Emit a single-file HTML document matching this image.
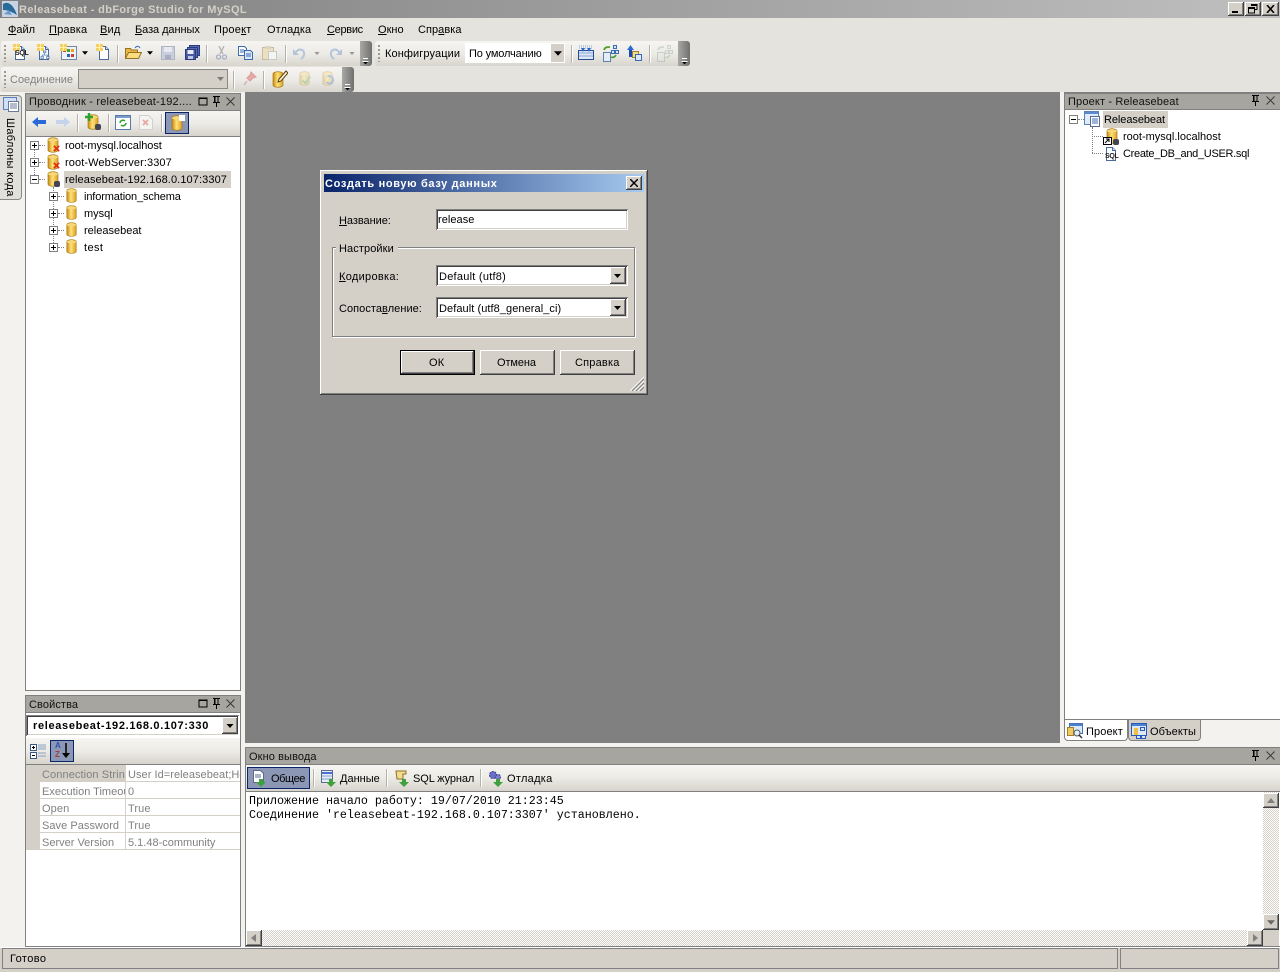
<!DOCTYPE html>
<html><head><meta charset="utf-8"><title>Releasebeat - dbForge Studio for MySQL</title>
<style>
html,body{margin:0;padding:0;width:1280px;height:972px;overflow:hidden;background:#808080}
#r{position:relative;width:1280px;height:972px;overflow:hidden;font:11px "Liberation Sans","DejaVu Sans",sans-serif;color:#000}
#r div,#r svg,#r span.t{position:absolute}
.t{white-space:nowrap;line-height:14px;letter-spacing:.1px;margin-top:1px}
.g{color:#808080}
.tb{background:linear-gradient(#f6f5f2,#ecebe6 50%,#d8d5cd);border-radius:3px}
.ptb{background:linear-gradient(#f6f5f2,#ecebe6 50%,#d6d3cb)}
.ph{background:#a6a59f;border:1px solid #808080;box-sizing:border-box}
.sep{width:1px;background:#b5b2aa;box-shadow:1px 0 #fff}
.end{background:linear-gradient(90deg,#a8a8a4,#707070);border-radius:0 3px 3px 0}
.bv{background:#d4d0c8;box-shadow:inset -1px -1px #404040,inset 1px 1px #fff,inset -2px -2px #808080,inset 2px 2px #d4d0c8}
.sk{background:#fff;box-shadow:inset 1px 1px #808080,inset -1px -1px #fff,inset 2px 2px #404040,inset -2px -2px #d4d0c8}
.ck{background:repeating-conic-gradient(#d4d0c8 0 25%,#fff 0 50%) 0 0/2px 2px}
.b{box-sizing:border-box;background:#fff;border:1px solid #808080}
.row{left:40px;width:200px;height:17px;box-sizing:border-box;border-bottom:1px solid #d4d0c8}
</style></head><body><div id="r">
<svg width="0" height="0" style="left:0;top:0"><defs>
<linearGradient id="gold"><stop offset="0" stop-color="#c98a10"/><stop offset=".45" stop-color="#ffe27a"/><stop offset="1" stop-color="#d9a020"/></linearGradient>
<symbol id="db" viewBox="0 0 16 16"><path d="M3 3c0-3 10-3 10 0v10c0 3-10 3-10 0z" fill="url(#gold)" stroke="#a87a18" stroke-width=".7"/><ellipse cx="8" cy="3" rx="5" ry="1.600" fill="#f6d878"/></symbol>
<symbol id="plus" viewBox="0 0 9 9"><rect x=".5" y=".5" width="8" height="8" fill="#fff" stroke="#808080"/><path d="M2 4.500h5M4.500 2v5" stroke="#000"/></symbol>
<symbol id="minus" viewBox="0 0 9 9"><rect x=".5" y=".5" width="8" height="8" fill="#fff" stroke="#808080"/><path d="M2 4.500h5" stroke="#000"/></symbol>
<symbol id="x" viewBox="0 0 8 8"><path d="M1 1l6 6M7 1l-6 6" stroke="#e03010" stroke-width="2"/></symbol>
<symbol id="doc" viewBox="0 0 16 16"><path d="M3.500 1.500h6l3 3v10h-9z" fill="#fff" stroke="#4a6a9a"/><path d="M9.500 1.500v3h3" fill="#d8e4f4" stroke="#4a6a9a"/></symbol>
<symbol id="star" viewBox="0 0 8 8"><rect width="8" height="8" fill="#f5d060"/><path d="M0 4h8M4 0v8" stroke="#fff4b0"/></symbol>
<symbol id="pin" viewBox="0 0 9 11"><path d="M2.500 1v5M6 1v5M1 6.500h7M1 .5h7M4.500 7v4M3 1v5" stroke="#000" fill="none"/></symbol>
<symbol id="cl" viewBox="0 0 9 9"><path d="M.5 .5l8 8M8.500 .5l-8 8" stroke="#333" stroke-width=".9"/></symbol>
<symbol id="win" viewBox="0 0 10 9"><rect x="1" y="1" width="8" height="7" fill="none" stroke="#000"/><path d="M1 1.500h8" stroke="#000"/></symbol>
<symbol id="arr" viewBox="0 0 7 4"><path d="M0 0h7L3.500 4z" fill="#000"/></symbol>
<symbol id="tree" viewBox="0 0 16 16"><g fill="#dce8f6" stroke="#3a6ab0"><rect x="5.500" y="1.500" width="4" height="3"/><rect x="1.500" y="10.500" width="4" height="3"/><rect x="10.500" y="10.500" width="4" height="3"/></g><path d="M7.500 5v3M3.500 10V8h9v2" stroke="#3a6ab0" fill="none"/></symbol>
</defs></svg>

<!-- title -->
<div style="left:0;top:0;width:1280px;height:18px;background:linear-gradient(90deg,#7f7f7f,#bfbfbf)"></div>
<svg style="left:2px;top:1px" width="16" height="16" viewBox="0 0 16 16"><rect width="16" height="16" fill="#c8d4e4"/><path d="M1 3c5-3 10 0 14 11-5-3-9-5-14-5z" fill="#2a6a9a"/><path d="M2 13l5-4 3 5z" fill="#6a9ac8"/></svg>
<span class="t" style="left:19px;top:2px;font-weight:bold;font-size:11px;color:#d4d0c8;letter-spacing:.37px">Releasebeat - dbForge Studio for MySQL</span>
<div class="bv" style="left:1228px;top:2px;width:16px;height:14px"></div><div style="left:1232px;top:11px;width:6px;height:2px;background:#000"></div>
<div class="bv" style="left:1245px;top:2px;width:16px;height:14px"></div>
<svg style="left:1248px;top:4px" width="10" height="10" viewBox="0 0 10 10"><path d="M3 .5h6v5H7M3 1.500h6" fill="none" stroke="#000"/><rect x=".5" y="3.500" width="6" height="5.500" fill="#d4d0c8" stroke="#000"/><path d="M1 4.500h5" stroke="#000"/></svg>
<div class="bv" style="left:1262px;top:2px;width:17px;height:14px"></div>
<svg style="left:1266px;top:5px" width="9" height="8" viewBox="0 0 9 8"><path d="M1 0l7 8M8 0l-7 8" stroke="#000" stroke-width="1.600"/></svg>

<!-- menu -->
<div style="left:0;top:18px;width:1280px;height:74px;background:#e5e3dd"></div>
<span class="t" style="left:8px;top:22px;letter-spacing:0"><u>Ф</u>айл</span>
<span class="t" style="left:49px;top:22px;letter-spacing:.2px"><u>П</u>равка</span>
<span class="t" style="left:100px;top:22px;letter-spacing:.2px"><u>В</u>ид</span>
<span class="t" style="left:135px;top:22px;letter-spacing:-.07px"><u>Б</u>аза данных</span>
<span class="t" style="left:214px;top:22px;letter-spacing:.2px">Прое<u>к</u>т</span>
<span class="t" style="left:267px;top:22px;letter-spacing:.1px">Отла<u>д</u>ка</span>
<span class="t" style="left:327px;top:22px;letter-spacing:-.3px"><u>С</u>ервис</span>
<span class="t" style="left:378px;top:22px;letter-spacing:0"><u>О</u>кно</span>
<span class="t" style="left:418px;top:22px;letter-spacing:.05px">Спр<u>а</u>вка</span>

<!-- toolbar 1 -->
<div class="tb" style="left:1px;top:41px;width:371px;height:25px"></div>
<div style="left:4px;top:45px;width:2px;height:17px;background:repeating-linear-gradient(#9a988f 0 2px,transparent 2px 4px)"></div>
<div class="end" style="left:360px;top:41px;width:12px;height:25px"></div>
<svg style="left:362px;top:58px" width="7" height="7" viewBox="0 0 7 7"><path d="M1 .5h5" stroke="#fff"/><path d="M0 3h7L3.500 6.500z" fill="#fff"/><path d="M1 4h5L3.500 6.500z" fill="#000"/></svg>

<svg style="left:12px;top:45px" width="16" height="16"><use href="#doc"/></svg><svg style="left:13px;top:44px" width="7" height="7"><use href="#star"/></svg>
<span class="t" style="left:15px;top:46px;font-size:7px;font-weight:bold;letter-spacing:-.3px;color:#222">SQL</span>
<svg style="left:36px;top:45px" width="16" height="16"><use href="#doc"/></svg><svg style="left:37px;top:44px" width="7" height="7"><use href="#star"/></svg>
<svg style="left:40px;top:50px" width="10" height="10" viewBox="0 0 16 16"><use href="#tree"/></svg>
<svg style="left:61px;top:46px" width="16" height="14" viewBox="0 0 16 14"><rect x=".5" y=".5" width="15" height="13" fill="#eef3fa" stroke="#7088a8"/><rect x="2" y="3" width="3" height="3" fill="#d04030"/><rect x="6" y="3" width="3" height="3" fill="#40a040"/><rect x="10" y="3" width="3" height="3" fill="#f0a020"/><rect x="6" y="8" width="3" height="3" fill="#3060c0"/><rect x="10" y="8" width="3" height="3" fill="#d04030"/></svg><svg style="left:60px;top:44px" width="7" height="7"><use href="#star"/></svg>
<svg style="left:82px;top:51px" width="6" height="4"><use href="#arr"/></svg>
<svg style="left:96px;top:45px" width="16" height="16"><use href="#doc"/></svg><svg style="left:96px;top:44px" width="7" height="7"><use href="#star"/></svg>
<div class="sep" style="left:117px;top:45px;height:18px"></div>
<svg style="left:125px;top:45px" width="17" height="15" viewBox="0 0 17 15"><path d="M.5 13.500v-10h5l1 1.500h6v8.500z" fill="#e8b840" stroke="#9a7020"/><path d="M.5 13.500l3-6h13l-3 6z" fill="#f8dc80" stroke="#9a7020"/><path d="M10 3c2-2.500 4-2 5 0" stroke="#3a6ab0" fill="none"/></svg>
<svg style="left:147px;top:51px" width="6" height="4"><use href="#arr"/></svg>
<svg style="left:161px;top:46px" width="14" height="14" viewBox="0 0 14 14"><rect x=".5" y=".5" width="13" height="13" fill="#c8cede" stroke="#b0b4c0"/><rect x="3" y="1" width="8" height="5" fill="#e8eaf0"/><rect x="4" y="9" width="6" height="4" fill="#a8aebe"/></svg>
<svg style="left:185px;top:45px" width="15" height="15" viewBox="0 0 15 15"><rect x="4.500" y=".5" width="10" height="10" fill="#5a6ab0" stroke="#2a3a80"/><rect x="2.500" y="2.500" width="10" height="10" fill="#5a6ab0" stroke="#2a3a80"/><rect x=".5" y="4.500" width="10" height="10" fill="#4a5aa0" stroke="#2a3a80"/><rect x="2.500" y="5" width="6" height="4" fill="#e8eaf4"/><rect x="3" y="11" width="5" height="3" fill="#c0c8e0"/></svg>
<div class="sep" style="left:206px;top:45px;height:18px"></div>
<svg style="left:216px;top:46px" width="11" height="15" viewBox="0 0 11 15"><path d="M3 0l4 8M8 0L4 8" stroke="#b0b0b4" stroke-width="1.300"/><circle cx="2.500" cy="11" r="2" fill="none" stroke="#a8b0c8" stroke-width="1.300"/><circle cx="8.500" cy="11" r="2" fill="none" stroke="#a8b0c8" stroke-width="1.300"/></svg>
<svg style="left:238px;top:46px" width="15" height="14" viewBox="0 0 15 14"><path d="M.5 .5h6l2 2v7h-8z" fill="#fff" stroke="#3a6ab0"/><path d="M6.500 4.500h6l2 2v7h-8z" fill="#dce8f8" stroke="#3a6ab0"/><path d="M2 4h4M2 6h4M8 8h5M8 10h5" stroke="#3a6ab0"/></svg>
<svg style="left:262px;top:46px" width="15" height="14" viewBox="0 0 15 14"><rect x=".5" y="1.500" width="11" height="12" fill="#ece0c0" stroke="#c8bc9c"/><rect x="3" y="0" width="6" height="3" fill="#d8d4c8"/><path d="M6.500 5.500h8v8h-8z" fill="#f4f4f0" stroke="#c8c8c8"/></svg>
<div class="sep" style="left:285px;top:45px;height:18px"></div>
<svg style="left:293px;top:47px" width="13" height="13" viewBox="0 0 13 13"><path d="M3 5c3-4 9-3 8 3-.3 2-2 3-3 4" fill="none" stroke="#b4c4dc" stroke-width="2"/><path d="M0 2v6h6z" fill="#b4c4dc"/></svg>
<svg style="left:314px;top:52px" width="6" height="3"><use href="#arr" opacity=".35"/></svg>
<svg style="left:329px;top:47px" width="13" height="13" viewBox="0 0 13 13"><path d="M10 5C7 1 1 2 2 8c.3 2 2 3 3 4" fill="none" stroke="#b4c4dc" stroke-width="2"/><path d="M13 2v6H7z" fill="#b4c4dc"/></svg>
<svg style="left:349px;top:52px" width="6" height="3"><use href="#arr" opacity=".35"/></svg>

<!-- toolbar config -->
<div class="tb" style="left:375px;top:41px;width:315px;height:25px"></div>
<div style="left:378px;top:45px;width:2px;height:17px;background:repeating-linear-gradient(#9a988f 0 2px,transparent 2px 4px)"></div>
<span class="t" style="left:385px;top:46px;letter-spacing:.1px">Конфигруации</span>
<div style="left:465px;top:43px;width:100px;height:20px;background:#fff"></div>
<span class="t" style="left:469px;top:46px;letter-spacing:-.15px">По умолчанию</span>
<div style="left:551px;top:44px;width:13px;height:18px;background:#d4d0c8"></div>
<svg style="left:554px;top:51px" width="8" height="5"><use href="#arr"/></svg>
<div class="sep" style="left:571px;top:45px;height:18px"></div>
<svg style="left:578px;top:45px" width="16" height="16" viewBox="0 0 16 16"><rect x=".5" y="5.500" width="15" height="9" fill="#dce8f8" stroke="#2a4a90"/><path d="M1 8h14M1 11h14" stroke="#8aa4d0"/><path d="M1 1h14M1 3h14" stroke="#8aa4d0" stroke-dasharray="1 1"/><path d="M3 3h4L5 7zM9 3h4l-2 4z" fill="#2a6ad0"/></svg>
<svg style="left:602px;top:45px" width="17" height="17" viewBox="0 0 17 17"><rect x="1.500" y="7.500" width="7" height="9" fill="#e4ecf8" stroke="#6080b0"/><path d="M2 5c1-3 3-3 6-3" stroke="#50a030" stroke-width="1.800" fill="none"/><path d="M9 12c2 1 4 0 5-2" stroke="#50a030" stroke-width="1.800" fill="none"/><g fill="#d8e4f8" stroke="#3a6ab0"><rect x="11.500" y=".5" width="3" height="3"/><rect x="9.500" y="5.500" width="3" height="3"/><rect x="13.500" y="5.500" width="3" height="3"/></g></svg>
<svg style="left:627px;top:45px" width="15" height="16" viewBox="0 0 15 16"><path d="M3.500 12V4" stroke="#1a4ab0" stroke-width="3"/><path d="M0 5l3.500-5L7 5z" fill="#2a6ad0"/><rect x="5.500" y="6.500" width="6" height="6" fill="#f4dc90" stroke="#a08030"/><rect x="8.500" y="9.500" width="6" height="6" fill="#dce8f8" stroke="#3a6ab0"/></svg>
<div class="sep" style="left:649px;top:45px;height:18px"></div>
<svg style="left:656px;top:45px" width="17" height="17" viewBox="0 0 17 17" opacity=".35"><rect x="1.500" y="7.500" width="7" height="9" fill="#e4e8e8" stroke="#90a0a0"/><path d="M2 5c1-3 3-3 6-3" stroke="#90b090" stroke-width="1.800" fill="none"/><path d="M9 12c2 1 4 0 5-2" stroke="#90b090" stroke-width="1.800" fill="none"/><g fill="#d8e4e8" stroke="#90a0a0"><rect x="11.500" y=".5" width="3" height="3"/><rect x="9.500" y="5.500" width="3" height="3"/><rect x="13.500" y="5.500" width="3" height="3"/></g></svg>
<div class="end" style="left:678px;top:41px;width:12px;height:25px"></div>
<svg style="left:681px;top:58px" width="7" height="7" viewBox="0 0 7 7"><path d="M1 .5h5" stroke="#fff"/><path d="M0 3h7L3.500 6.500z" fill="#fff"/><path d="M1 4h5L3.500 6.500z" fill="#000"/></svg>

<!-- toolbar 2 -->
<div class="tb" style="left:1px;top:67px;width:353px;height:25px"></div>
<div style="left:4px;top:71px;width:2px;height:17px;background:repeating-linear-gradient(#9a988f 0 2px,transparent 2px 4px)"></div>
<span class="t g" style="left:10px;top:72px;letter-spacing:0">Соединение</span>
<div style="left:78px;top:69px;width:150px;height:20px;box-sizing:border-box;border:1px solid #8a8a84;background:#d4d0c8"></div>
<svg style="left:217px;top:77px" width="7" height="4"><use href="#arr" opacity=".4"/></svg>
<div class="sep" style="left:233px;top:71px;height:18px"></div>
<svg style="left:243px;top:71px" width="14" height="15" viewBox="0 0 14 15"><path d="M8 1l5 5-3 1-3 3-3-3 3-3z" fill="#e8a8a8" stroke="#d8a0a0"/><path d="M4 10l-3 4" stroke="#c8b8b8" stroke-width="1.500"/></svg>
<div class="sep" style="left:263px;top:71px;height:18px"></div>
<svg style="left:272px;top:70px" width="16" height="18" viewBox="0 0 16 18"><path d="M1 4c0-3 10-3 10 0v11c0 3-10 3-10 0z" fill="url(#gold)" stroke="#a87a18" stroke-width=".7"/><path d="M14 1L7 9l-1 3 3-1 7-8z" fill="#f8f0d0" stroke="#5a4010"/></svg>
<svg style="left:297px;top:70px" width="15" height="17" viewBox="0 0 16 16" opacity=".3"><use href="#db"/><path d="M6 10l3 3 5-7" stroke="#40a040" stroke-width="2" fill="none"/></svg>
<svg style="left:320px;top:70px" width="15" height="17" viewBox="0 0 16 16" opacity=".3"><use href="#db"/><path d="M8 6a4 4 0 1 1-1 6" stroke="#2a6ad0" stroke-width="2" fill="none"/></svg>
<div class="end" style="left:342px;top:67px;width:12px;height:25px"></div>
<svg style="left:344px;top:84px" width="7" height="7" viewBox="0 0 7 7"><path d="M1 .5h5" stroke="#fff"/><path d="M0 3h7L3.500 6.500z" fill="#fff"/><path d="M1 4h5L3.500 6.500z" fill="#000"/></svg>

<!-- left strip -->
<div style="left:0;top:92px;width:245px;height:855px;background:#f3f2ef"></div>
<div style="left:0;top:95px;width:22px;height:105px;box-sizing:border-box;border:1px solid #8a8a84;border-left:0;border-radius:0 4px 4px 0;background:#e2e0da"></div>
<svg style="left:3px;top:97px" width="17" height="16" viewBox="0 0 17 16"><rect x=".5" y=".5" width="13" height="12" fill="#cfe0f6" stroke="#5a80c0"/><rect x="5.500" y="4.500" width="10" height="10" fill="#fff" stroke="#6a7a9a"/><path d="M7 7h7M7 9h7M7 11h7" stroke="#6a7a9a"/></svg>
<span class="t" style="left:3px;top:117px;writing-mode:vertical-rl;line-height:14px;letter-spacing:.3px">Шаблоны кода</span>

<!-- explorer -->
<div class="b" style="left:25px;top:93px;width:216px;height:598px"></div>
<div class="ph" style="left:25px;top:93px;width:216px;height:18px"></div>
<span class="t" style="left:29px;top:94px;color:#111;letter-spacing:.2px">Проводник - releasebeat-192....</span>
<svg style="left:198px;top:97px" width="10" height="9"><use href="#win"/></svg>
<svg style="left:212px;top:96px" width="9" height="11"><use href="#pin"/></svg>
<svg style="left:226px;top:97px" width="9" height="9"><use href="#cl"/></svg>
<div class="ptb" style="left:26px;top:111px;width:214px;height:25px;border-bottom:1px solid #808080"></div>
<svg style="left:32px;top:116px" width="14" height="12" viewBox="0 0 14 12"><path d="M0 6l6-5v3h8v4H6v3z" fill="#2a6ad8"/></svg>
<svg style="left:56px;top:116px" width="14" height="12" viewBox="0 0 14 12"><path d="M14 6L8 1v3H0v4h8v3z" fill="#c4d4ea"/></svg>
<div class="sep" style="left:77px;top:114px;height:18px"></div>
<svg style="left:85px;top:114px" width="16" height="16"><use href="#db"/></svg>
<svg style="left:85px;top:113px" width="8" height="8" viewBox="0 0 8 8"><path d="M4 0v8M0 4h8" stroke="#30a030" stroke-width="2.500"/></svg>
<svg style="left:95px;top:124px" width="6" height="6" viewBox="0 0 6 6"><rect width="6" height="6" rx="2" fill="#445"/></svg>
<div class="sep" style="left:108px;top:114px;height:18px"></div>
<svg style="left:115px;top:115px" width="16" height="15" viewBox="0 0 16 15"><rect x=".5" y=".5" width="15" height="14" fill="#fff" stroke="#5a7aa8"/><rect x="1" y="1" width="14" height="2" fill="#7a9cd0"/><path d="M5 8a3 3 0 0 1 5-2M11 8a3 3 0 0 1-5 2" stroke="#30a030" stroke-width="1.500" fill="none"/></svg>
<svg style="left:139px;top:115px" width="14" height="15" viewBox="0 0 14 15"><path d="M.5 .5h9l4 4v10H.5z" fill="#f4f4f2" stroke="#d0d0cc"/><path d="M4 5l5 5M9 5l-5 5" stroke="#e8a8a0" stroke-width="1.800"/></svg>
<div class="sep" style="left:161px;top:114px;height:18px"></div>
<div style="left:165px;top:112px;width:24px;height:22px;box-sizing:border-box;border:1px solid #0a246a;background:#8c97b5"></div>
<svg style="left:169px;top:115px" width="16" height="16"><use href="#db"/></svg>
<div style="left:179px;top:115px;width:6px;height:6px;background:#fff"></div>

<!-- tree -->
<div style="left:34px;top:150px;width:0;height:29px;border-left:1px dotted #808080"></div>
<div style="left:53px;top:187px;width:0;height:60px;border-left:1px dotted #808080"></div>
<div style="left:39px;top:145px;width:6px;border-top:1px dotted #808080"></div>
<div style="left:39px;top:162px;width:6px;border-top:1px dotted #808080"></div>
<div style="left:39px;top:179px;width:6px;border-top:1px dotted #808080"></div>
<div style="left:58px;top:196px;width:6px;border-top:1px dotted #808080"></div>
<div style="left:58px;top:213px;width:6px;border-top:1px dotted #808080"></div>
<div style="left:58px;top:230px;width:6px;border-top:1px dotted #808080"></div>
<div style="left:58px;top:247px;width:6px;border-top:1px dotted #808080"></div>
<svg style="left:30px;top:141px" width="9" height="9"><use href="#plus"/></svg>
<svg style="left:30px;top:158px" width="9" height="9"><use href="#plus"/></svg>
<svg style="left:30px;top:175px" width="9" height="9"><use href="#minus"/></svg>
<svg style="left:49px;top:192px" width="9" height="9"><use href="#plus"/></svg>
<svg style="left:49px;top:209px" width="9" height="9"><use href="#plus"/></svg>
<svg style="left:49px;top:226px" width="9" height="9"><use href="#plus"/></svg>
<svg style="left:49px;top:243px" width="9" height="9"><use href="#plus"/></svg>
<svg style="left:45px;top:137px" width="16" height="16"><use href="#db"/></svg><svg style="left:53px;top:145px" width="7" height="7"><use href="#x"/></svg>
<svg style="left:45px;top:154px" width="16" height="16"><use href="#db"/></svg><svg style="left:53px;top:162px" width="7" height="7"><use href="#x"/></svg>
<svg style="left:45px;top:171px" width="16" height="16"><use href="#db"/></svg><svg style="left:54px;top:181px" width="6" height="6" viewBox="0 0 6 6"><rect width="6" height="6" rx="2" fill="#445"/></svg>
<svg style="left:64px;top:188px" width="15" height="15"><use href="#db"/></svg>
<svg style="left:64px;top:205px" width="15" height="15"><use href="#db"/></svg>
<svg style="left:64px;top:222px" width="15" height="15"><use href="#db"/></svg>
<svg style="left:64px;top:239px" width="15" height="15"><use href="#db"/></svg>
<div style="left:64px;top:171px;width:167px;height:17px;background:#d4d0c8"></div>
<span class="t" style="left:65px;top:138px;letter-spacing:-.05px">root-mysql.localhost</span>
<span class="t" style="left:65px;top:155px">root-WebServer:3307</span>
<span class="t" style="left:65px;top:172px">releasebeat-192.168.0.107:3307</span>
<span class="t" style="left:84px;top:189px;letter-spacing:-.13px">information_schema</span>
<span class="t" style="left:84px;top:206px;letter-spacing:0">mysql</span>
<span class="t" style="left:84px;top:223px;letter-spacing:0">releasebeat</span>
<span class="t" style="left:84px;top:240px;letter-spacing:.4px">test</span>

<!-- properties -->
<div class="b" style="left:25px;top:695px;width:216px;height:252px"></div>
<div class="ph" style="left:25px;top:695px;width:216px;height:18px"></div>
<span class="t" style="left:29px;top:697px;color:#111">Свойства</span>
<svg style="left:198px;top:699px" width="10" height="9"><use href="#win"/></svg>
<svg style="left:212px;top:698px" width="9" height="11"><use href="#pin"/></svg>
<svg style="left:226px;top:699px" width="9" height="9"><use href="#cl"/></svg>
<div class="sk" style="left:26px;top:715px;width:213px;height:21px"></div>
<span class="t" style="left:33px;top:718px;font-weight:bold;letter-spacing:.67px">releasebeat-192.168.0.107:330</span>
<div class="bv" style="left:222px;top:717px;width:16px;height:17px"></div>
<svg style="left:226px;top:724px" width="8" height="4"><use href="#arr"/></svg>
<div class="ptb" style="left:26px;top:738px;width:214px;height:26px;border-bottom:1px solid #808080"></div>
<svg style="left:30px;top:743px" width="17" height="17" viewBox="0 0 17 17"><g fill="#fff" stroke="#3a5a80"><rect x=".5" y="1.500" width="6" height="6"/><rect x=".5" y="9.500" width="6" height="6"/></g><path d="M2 4.500h3M3.500 3v3M2 12.500h3" stroke="#000"/><path d="M8 2h8M8 4h8M8 6h8M8 10h8M8 13h8" stroke="#8aa0c0"/></svg>
<div style="left:50px;top:740px;width:24px;height:22px;box-sizing:border-box;border:1px solid #0a246a;background:#8c97b5"></div>
<span class="t" style="left:55px;top:740px;font-size:8px;font-weight:bold;line-height:9px;color:#3050b0;letter-spacing:0">A<br><span style="color:#a04040">Z</span></span>
<svg style="left:62px;top:743px" width="8" height="16" viewBox="0 0 8 16"><path d="M4 0v12" stroke="#000" stroke-width="1.500"/><path d="M0 10h8l-4 5z" fill="#000"/></svg>
<div style="left:26px;top:765px;width:14px;height:85px;background:#d4d0c8"></div>
<div style="left:40px;top:765px;width:86px;height:17px;background:#d4d0c8"></div>
<div class="row" style="top:765px"></div><div class="row" style="top:782px"></div><div class="row" style="top:799px"></div><div class="row" style="top:816px"></div><div class="row" style="top:833px"></div>
<div style="left:125px;top:765px;width:1px;height:85px;background:#d4d0c8"></div>
<div class="t g" style="left:42px;top:767px;width:83px;overflow:hidden">Connection String</div>
<div class="t g" style="left:42px;top:784px;width:83px;overflow:hidden;letter-spacing:0">Execution Timeout</div>
<span class="t g" style="left:42px;top:801px">Open</span>
<span class="t g" style="left:42px;top:818px;letter-spacing:.05px">Save Password</span>
<span class="t g" style="left:42px;top:835px;letter-spacing:0">Server Version</span>
<div class="t g" style="left:128px;top:767px;width:112px;overflow:hidden;letter-spacing:.05px">User Id=releasebeat;Host</div>
<span class="t g" style="left:128px;top:784px">0</span>
<span class="t g" style="left:128px;top:801px">True</span>
<span class="t g" style="left:128px;top:818px">True</span>
<span class="t g" style="left:128px;top:835px;letter-spacing:0">5.1.48-community</span>

<!-- project panel -->
<div style="left:1060px;top:92px;width:4px;height:655px;background:#f3f2ef"></div>
<div style="left:1064px;top:719px;width:216px;height:28px;background:#f3f2ef"></div>
<div class="b" style="left:1064px;top:93px;width:216px;height:627px;border-right:0"></div>
<div class="ph" style="left:1064px;top:93px;width:216px;height:17px;border-right:0"></div>
<span class="t" style="left:1068px;top:94px;color:#111;letter-spacing:.15px">Проект - Releasebeat</span>
<svg style="left:1251px;top:95px" width="9" height="11"><use href="#pin"/></svg>
<svg style="left:1266px;top:96px" width="9" height="9"><use href="#cl"/></svg>
<div style="left:1092px;top:127px;height:26px;width:0;border-left:1px dotted #808080"></div>
<div style="left:1092px;top:136px;width:11px;border-top:1px dotted #808080"></div>
<div style="left:1092px;top:153px;width:11px;border-top:1px dotted #808080"></div>
<div style="left:1078px;top:119px;width:6px;border-top:1px dotted #808080"></div>
<svg style="left:1069px;top:115px" width="9" height="9"><use href="#minus"/></svg>
<svg style="left:1084px;top:111px" width="17" height="16" viewBox="0 0 17 16"><rect x=".5" y=".5" width="14" height="13" fill="#e0ecfa" stroke="#5a80b8"/><rect x="1" y="1" width="13" height="2" fill="#5a8ad0"/><rect x="6.500" y="5.500" width="9" height="10" fill="#fff" stroke="#5a6a90"/><path d="M8 8h6M8 10h6M8 12h6" stroke="#3a6ab0"/></svg>
<div style="left:1103px;top:111px;width:65px;height:17px;background:#d4d0c8"></div>
<span class="t" style="left:1104px;top:112px;letter-spacing:-.07px">Releasebeat</span>
<svg style="left:1104px;top:128px" width="16" height="16"><use href="#db"/></svg>
<svg style="left:1103px;top:137px" width="9" height="8" viewBox="0 0 9 8"><rect x=".5" y=".5" width="8" height="7" fill="#fff" stroke="#000"/><path d="M2 6l4-4M3 2h3v3" stroke="#000" fill="none"/></svg>
<svg style="left:1113px;top:139px" width="6" height="6" viewBox="0 0 6 6"><rect width="6" height="6" rx="2" fill="#445"/></svg>
<span class="t" style="left:1123px;top:129px;letter-spacing:0">root-mysql.localhost</span>
<svg style="left:1103px;top:146px" width="16" height="16"><use href="#doc"/></svg>
<span class="t" style="left:1105px;top:149px;font-size:7px;font-weight:bold;letter-spacing:-.3px;color:#222">SQL</span>
<span class="t" style="left:1123px;top:146px;letter-spacing:-.3px">Create_DB_and_USER.sql</span>
<div style="left:1064px;top:720px;width:64px;height:21px;box-sizing:border-box;background:#fff;border:1px solid #808080;border-top:0;border-radius:0 0 4px 4px"></div>
<div style="left:1128px;top:720px;width:73px;height:21px;box-sizing:border-box;background:#d4d0c8;border:1px solid #808080;border-top:0;border-radius:0 0 4px 4px"></div>
<svg style="left:1067px;top:723px" width="16" height="16" viewBox="0 0 16 16"><rect x="2.500" y=".5" width="13" height="10" fill="#dce8f8" stroke="#4a70b0"/><rect x="3" y="1" width="12" height="2" fill="#4a80d0"/><path d="M.5 4.500h6v8h-6z" fill="#f0cc60" stroke="#a08030"/><circle cx="10" cy="10" r="3" fill="#e4f0fa" stroke="#505860"/><path d="M12 12l3 3" stroke="#303030" stroke-width="1.500"/></svg>
<span class="t" style="left:1086px;top:724px">Проект</span>
<svg style="left:1131px;top:723px" width="16" height="16" viewBox="0 0 16 16"><rect x=".5" y=".5" width="15" height="12" fill="#dce8f8" stroke="#2a5ab8"/><rect x="1" y="1" width="14" height="2" fill="#4a80d0"/><path d="M3 5h4v7H3z" fill="#f0c040"/><g fill="#d8e4f8" stroke="#2a5ab8"><rect x="9.500" y="4.500" width="4" height="3"/><rect x="5.500" y="12.500" width="4" height="3"/><rect x="10.500" y="12.500" width="4" height="3"/></g></svg>
<span class="t" style="left:1150px;top:724px">Объекты</span>

<!-- output -->
<div style="left:245px;top:743px;width:819px;height:4px;background:#f3f2ef"></div>
<div class="b" style="left:245px;top:747px;width:1035px;height:200px;border-right:0"></div>
<div class="ph" style="left:245px;top:747px;width:1035px;height:18px;border-right:0"></div>
<span class="t" style="left:249px;top:749px;color:#111">Окно вывода</span>
<svg style="left:1251px;top:750px" width="9" height="11"><use href="#pin"/></svg>
<svg style="left:1266px;top:751px" width="9" height="9"><use href="#cl"/></svg>
<div class="ptb" style="left:246px;top:765px;width:1034px;height:26px;border-bottom:1px solid #808080"></div>
<div style="left:247px;top:767px;width:63px;height:22px;box-sizing:border-box;border:1px solid #0a246a;background:#8c97b5"></div>
<svg style="left:252px;top:770px" width="16" height="17" viewBox="0 0 16 17"><path d="M1.500 .5h7l3 3v9h-10z" fill="#fff" stroke="#5a6a90"/><path d="M3 5h6M3 7h6" stroke="#5a6a90"/><path d="M7 9h4v3h3l-5 5-5-5h3z" fill="#40a040"/></svg>
<span class="t" style="left:271px;top:771px;letter-spacing:-.4px">Общее</span>
<div class="sep" style="left:313px;top:769px;height:18px"></div>
<svg style="left:321px;top:770px" width="16" height="17" viewBox="0 0 16 17"><rect x=".5" y=".5" width="11" height="12" fill="#e4ecfa" stroke="#5a6a90"/><path d="M1 3h10" stroke="#4a70d0" stroke-width="2"/><path d="M1 6h10M1 9h10" stroke="#8aa0c8"/><path d="M8 9h4v3h3l-5 5-5-5h3z" fill="#40a040"/></svg>
<span class="t" style="left:340px;top:771px;letter-spacing:0">Данные</span>
<div class="sep" style="left:386px;top:769px;height:18px"></div>
<svg style="left:394px;top:770px" width="16" height="17" viewBox="0 0 16 17"><path d="M2 1h10v3H9v5H3z" fill="#f0dc90" stroke="#907020"/><path d="M8 9h4v3h3l-5 5-5-5h3z" fill="#40a040"/></svg>
<span class="t" style="left:413px;top:771px;letter-spacing:-.1px">SQL журнал</span>
<div class="sep" style="left:480px;top:769px;height:18px"></div>
<svg style="left:488px;top:770px" width="16" height="17" viewBox="0 0 16 17"><circle cx="5" cy="5" r="3.500" fill="#6a70c8" stroke="#3a3a90" stroke-dasharray="2 1"/><circle cx="10" cy="7" r="2.500" fill="#7a80d0" stroke="#3a3a90" stroke-dasharray="2 1"/><path d="M8 9h4v3h3l-5 5-5-5h3z" fill="#40a040"/></svg>
<span class="t" style="left:507px;top:771px;letter-spacing:.3px">Отладка</span>
<span class="t" style="left:249px;top:793px;font-family:'Liberation Mono',monospace;font-size:11.67px;letter-spacing:0">Приложение начало работу: 19/07/2010 21:23:45</span>
<span class="t" style="left:249px;top:807px;font-family:'Liberation Mono',monospace;font-size:11.67px;letter-spacing:0">Соединение 'releasebeat-192.168.0.107:3307' установлено.</span>
<div class="ck" style="left:1263px;top:792px;width:16px;height:138px"></div>
<div class="bv" style="left:1263px;top:793px;width:16px;height:15px"></div>
<svg style="left:1267px;top:798px" width="8" height="5" viewBox="0 0 8 5"><path d="M0 5h8L4 0z" fill="#808080"/></svg>
<div class="bv" style="left:1263px;top:914px;width:16px;height:16px"></div>
<svg style="left:1267px;top:920px" width="8" height="5"><use href="#arr" opacity=".5"/></svg>
<div class="ck" style="left:246px;top:930px;width:1017px;height:16px"></div>
<div class="bv" style="left:246px;top:930px;width:16px;height:16px"></div>
<svg style="left:251px;top:934px" width="5" height="8" viewBox="0 0 5 8"><path d="M5 0v8L0 4z" fill="#808080"/></svg>
<div class="bv" style="left:1247px;top:930px;width:16px;height:16px"></div>
<svg style="left:1253px;top:934px" width="5" height="8" viewBox="0 0 5 8"><path d="M0 0v8l5-4z" fill="#808080"/></svg>
<div style="left:1263px;top:930px;width:16px;height:16px;background:#d4d0c8"></div>

<!-- status -->
<div style="left:0;top:947px;width:1280px;height:25px;background:#d4d0c8;border-top:1px solid #fff;box-sizing:border-box"></div>
<div style="left:2px;top:948px;width:1116px;height:21px;box-sizing:border-box;border:1px solid #808080"></div>
<div style="left:1120px;top:948px;width:159px;height:21px;box-sizing:border-box;border:1px solid #808080"></div>
<span class="t" style="left:10px;top:951px;letter-spacing:.4px">Готово</span>

<!-- dialog -->
<div class="bv" style="left:320px;top:170px;width:328px;height:225px"></div>
<div style="left:324px;top:174px;width:320px;height:18px;background:linear-gradient(90deg,#0a246a,#a6caf0)"></div>
<span class="t" style="left:325px;top:176px;color:#fff;font-weight:bold;letter-spacing:.66px">Создать новую базу данных</span>
<div class="bv" style="left:626px;top:176px;width:16px;height:14px"></div>
<svg style="left:630px;top:179px" width="8" height="8" viewBox="0 0 8 8"><path d="M0 0l8 8M8 0L0 8" stroke="#000" stroke-width="1.500"/></svg>
<span class="t" style="left:339px;top:213px;letter-spacing:-.05px"><u>Н</u>азвание:</span>
<div class="sk" style="left:436px;top:209px;width:192px;height:21px"></div>
<span class="t" style="left:438px;top:212px;letter-spacing:.05px">release</span>
<div style="left:332px;top:247px;width:303px;height:90px;box-sizing:border-box;border:1px solid #808080;box-shadow:1px 1px #fff,inset 1px 1px #fff"></div>
<div style="left:336px;top:241px;width:62px;height:14px;background:#d4d0c8"></div>
<span class="t" style="left:339px;top:241px;letter-spacing:.1px">Настройки</span>
<span class="t" style="left:339px;top:269px;letter-spacing:.3px"><u>К</u>одировка:</span>
<div class="sk" style="left:436px;top:265px;width:192px;height:21px"></div>
<span class="t" style="left:439px;top:269px;letter-spacing:.25px">Default (utf8)</span>
<div class="bv" style="left:610px;top:267px;width:16px;height:17px"></div>
<svg style="left:614px;top:274px" width="7" height="4"><use href="#arr"/></svg>
<span class="t" style="left:339px;top:301px;letter-spacing:.05px">Сопоста<u>в</u>ление:</span>
<div class="sk" style="left:436px;top:297px;width:192px;height:21px"></div>
<span class="t" style="left:439px;top:301px;letter-spacing:.07px">Default (utf8_general_ci)</span>
<div class="bv" style="left:610px;top:299px;width:16px;height:17px"></div>
<svg style="left:614px;top:306px" width="7" height="4"><use href="#arr"/></svg>
<div style="left:400px;top:350px;width:75px;height:25px;background:#000"></div>
<div class="bv" style="left:401px;top:351px;width:73px;height:23px"></div>
<span class="t" style="left:429px;top:355px;letter-spacing:.2px">ОК</span>
<div class="bv" style="left:480px;top:350px;width:75px;height:25px"></div>
<span class="t" style="left:497px;top:355px;letter-spacing:-.1px">Отмена</span>
<div class="bv" style="left:560px;top:350px;width:75px;height:25px"></div>
<span class="t" style="left:575px;top:355px;letter-spacing:.2px">Справка</span>
<svg style="left:630px;top:377px" width="14" height="14" viewBox="0 0 14 14"><path d="M13 1L1 13M14 2L2 14M13 5L5 13M14 6L6 14M13 9l-4 4M14 10l-4 4" stroke="#808080"/><path d="M14 0L0 14M14 4L4 14M14 8L8 14" stroke="#fff"/></svg>
</div></body></html>
